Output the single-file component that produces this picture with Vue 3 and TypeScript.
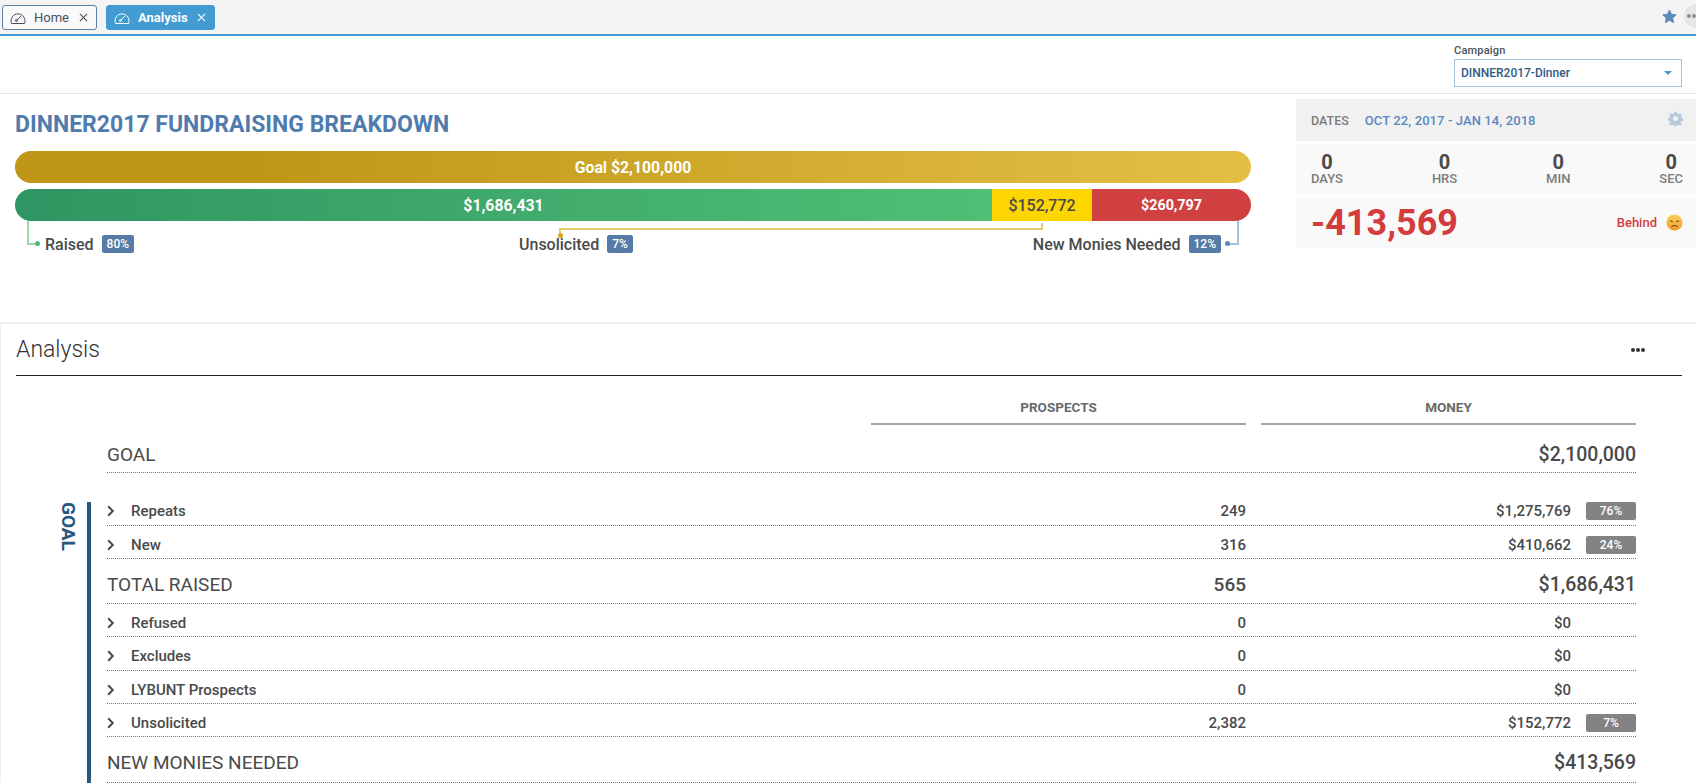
<script setup lang="ts">
interface Row {
  label: string
  prospects: string
  money: string
  pct?: string
  big?: boolean
}
const rows: Row[] = [
  { label: 'Repeats', prospects: '249', money: '$1,275,769', pct: '76%' },
  { label: 'New', prospects: '316', money: '$410,662', pct: '24%' },
  { label: 'TOTAL RAISED', prospects: '565', money: '$1,686,431', big: true },
  { label: 'Refused', prospects: '0', money: '$0' },
  { label: 'Excludes', prospects: '0', money: '$0' },
  { label: 'LYBUNT Prospects', prospects: '0', money: '$0' },
  { label: 'Unsolicited', prospects: '2,382', money: '$152,772', pct: '7%' },
  { label: 'NEW MONIES NEEDED', prospects: '', money: '$413,569', big: true }
]
const timers = [
  { v: '0', l: 'DAYS' },
  { v: '0', l: 'HRS' },
  { v: '0', l: 'MIN' },
  { v: '0', l: 'SEC' }
]
</script>

<template>
  <div class="page">
    <div class="tabbar">
      <div class="tab">
        <svg class="gauge" viewBox="0 0 16 14"><path d="M1.500 12.500a7 7 0 1 1 13 0z" fill="none" stroke="currentColor" stroke-width="1"/><path d="M6.500 9.500L11 5" stroke="currentColor" stroke-width="1"/><circle cx="6.500" cy="9.500" r="1.100" fill="none" stroke="currentColor"/></svg>
        <span class="tab-label">Home</span>
        <svg class="x" viewBox="0 0 10 10"><path d="M1 1l8 8M9 1l-8 8" stroke="currentColor" stroke-width="1.200"/></svg>
      </div>
      <div class="tab active">
        <svg class="gauge" viewBox="0 0 16 14"><path d="M1.500 12.500a7 7 0 1 1 13 0z" fill="none" stroke="currentColor" stroke-width="1"/><path d="M6.500 9.500L11 5" stroke="currentColor" stroke-width="1"/><circle cx="6.500" cy="9.500" r="1.100" fill="none" stroke="currentColor"/></svg>
        <span class="tab-label">Analysis</span>
        <svg class="x" viewBox="0 0 10 10"><path d="M1 1l8 8M9 1l-8 8" stroke="currentColor" stroke-width="1.200"/></svg>
      </div>
      <div class="tab-tools">
        <svg class="star" viewBox="0 0 24 24"><path d="M12 1.500l3.200 6.900 7.400.9-5.500 5.100 1.500 7.400L12 18.100l-6.600 3.700 1.500-7.400L1.400 9.300l7.400-.9z" fill="#5b88bd" stroke="#5b88bd" stroke-width="1.500" stroke-linejoin="round"/></svg>
        <div class="more-circle"><i></i><i></i><i></i></div>
      </div>
    </div>

    <div class="filterbar">
      <div class="field">
        <label>Campaign</label>
        <div class="select">
          <span>DINNER2017-Dinner</span>
          <b class="caret"></b>
        </div>
      </div>
    </div>

    <div class="summary">
      <div class="breakdown">
        <h1>DINNER2017 FUNDRAISING BREAKDOWN</h1>
        <div class="bar goal-bar">Goal $2,100,000</div>
        <div class="bar split-bar">
          <div class="seg seg-green">$1,686,431</div>
          <div class="seg seg-yellow">$152,772</div>
          <div class="seg seg-red">$260,797</div>
        </div>
        <div class="legend">
          <div class="leg leg-raised">
            <span class="conn conn-green"><i></i></span>
            <span class="leg-label">Raised</span><span class="badge">80%</span>
          </div>
          <div class="leg leg-unsol">
            <span class="conn conn-yellow"><i></i></span>
            <span class="leg-label">Unsolicited</span><span class="badge">7%</span>
          </div>
          <div class="leg leg-new">
            <span class="leg-label">New Monies Needed</span><span class="badge">12%</span>
            <span class="conn conn-blue"><i></i></span>
          </div>
        </div>
      </div>

      <aside class="side">
        <div class="dates">
          <span class="dates-k">DATES</span>
          <span class="dates-v">OCT 22, 2017 - JAN 14, 2018</span>
          <svg class="gear" viewBox="0 0 24 24"><path fill="#b9c9dc" fill-rule="evenodd" d="M10 1h4l.6 3 2.200.9 2.600-1.700 2.800 2.800-1.700 2.600.9 2.200 3 .6v4l-3 .6-.9 2.200 1.700 2.600-2.800 2.800-2.600-1.700-2.200.9-.6 3h-4l-.6-3-2.200-.9-2.600 1.700-2.800-2.800 1.700-2.600-.9-2.200-3-.6v-4l3-.6.9-2.200-1.700-2.600L4.600 3.200l2.600 1.700 2.200-.9zM12 8a4 4 0 1 0 0 8 4 4 0 0 0 0-8z"/></svg>
        </div>
        <div class="timers">
          <div v-for="t in timers" :key="t.l" class="timer">
            <strong>{{ t.v }}</strong>
            <span>{{ t.l }}</span>
          </div>
        </div>
        <div class="result">
          <span class="result-num">-413,569</span>
          <span class="result-status">Behind</span>
          <svg class="emoji" viewBox="0 0 20 20">
            <defs>
              <linearGradient id="face" x1="0" y1="0" x2="0" y2="1">
                <stop offset="0" stop-color="#fbd25a"/>
                <stop offset="1" stop-color="#f09a2c"/>
              </linearGradient>
            </defs>
            <circle cx="10" cy="10" r="9.500" fill="url(#face)"/>
            <path d="M4.500 8l3.500 1.200M15.500 8L12 9.200" stroke="#7a4a12" stroke-width="1.300" fill="none"/>
            <path d="M6.500 15q3.500-3 7 0" stroke="#7a4a12" stroke-width="1.300" fill="none"/>
          </svg>
        </div>
      </aside>
    </div>

    <section class="card">
      <header class="card-head">
        <h2>Analysis</h2>
        <div class="dots"><i></i><i></i><i></i></div>
      </header>
      <div class="table">
        <div class="cols">
          <div class="col-spacer"></div>
          <div class="col-h">PROSPECTS</div>
          <div class="col-h">MONEY</div>
        </div>
        <div class="row big goal-row">
          <div class="cell-label">GOAL</div>
          <div class="cell-p"></div>
          <div class="cell-m">$2,100,000</div>
        </div>
        <div class="group">
          <div class="group-tag"><span>GOAL</span></div>
          <div class="group-rows">
            <div v-for="r in rows" :key="r.label" class="row" :class="{ big: r.big }">
              <div class="cell-label">
                <svg v-if="!r.big" class="chev" viewBox="0 0 8 12"><path d="M1.200 1.200L5.800 6l-4.600 4.800" fill="none" stroke="currentColor" stroke-width="2"/></svg>
                {{ r.label }}
              </div>
              <div class="cell-p">{{ r.prospects }}</div>
              <div class="cell-m" :class="{ inset: !r.big }">
                <span>{{ r.money }}</span>
                <em v-if="!r.big" class="pct" :class="{ empty: !r.pct }">{{ r.pct }}</em>
              </div>
            </div>
          </div>
        </div>
      </div>
    </section>
  </div>
</template>

<style>
html, body { margin: 0; background: #fff; overflow: hidden; }
</style>

<style scoped>
.page { width: 1696px; height: 783px; overflow: hidden; font-family: Roboto, "Liberation Sans", sans-serif; color: #4a4a4a; background: #fff; }

.tabbar { height: 34px; box-sizing: content-box; background: #f4f4f4; border-bottom: 2px solid #429bd1; display: flex; align-items: flex-start; }
.tab { margin-top: 5px; height: 25px; box-sizing: border-box; border: 1px solid #5b7ea6; border-radius: 3px; background: #fafafa; display: flex; align-items: center; margin-left: 2px; width: 95px; padding: 0 6px; font-size: 13px; color: #48505c; }
.tab.active { background: #429bd1; border-color: #429bd1; color: #fff; width: 109px; margin-left: 9px; font-weight: 700; font-size: 13px; }
.gauge { width: 16px; height: 14px; flex: none; margin-left: 1px; }
.tab-label { margin-left: 8px; flex: 1; }
.tab.active .tab-label { margin-left: 8px; }
.x { width: 9px; height: 9px; flex: none; margin-right: 2px; }
.tab-tools { margin-left: auto; display: flex; align-items: center; height: 32px; }
.star { width: 15px; height: 15px; margin-right: 7px; }
.more-circle { width: 24px; height: 24px; border-radius: 50%; background: #e6e6e6; display: flex; align-items: center; gap: 1px; padding-left: 3px; box-sizing: border-box; margin-right: -12px; }
.more-circle i { width: 4px; height: 4px; border-radius: 50%; background: #8d8d8d; }

.filterbar { height: 57px; box-sizing: content-box; border-bottom: 1px solid #e6e6e6; display: flex; justify-content: flex-end; padding-right: 14px; }
.field { width: 228px; padding-top: 8px; }
.field label { display: block; font-size: 11px; font-weight: 500; line-height: 14px; color: #4a5058; letter-spacing: .2px; }
.select { margin-top: 1px; height: 28px; box-sizing: border-box; border: 1px solid #a9c1da; display: flex; align-items: center; justify-content: space-between; padding: 0 9px 0 6px; font-size: 12px; font-weight: 500; color: #2f5a85; }
.caret { width: 0; height: 0; border-left: 4px solid transparent; border-right: 4px solid transparent; border-top: 4px solid #429bd1; }

.summary { display: flex; height: 229px; box-sizing: border-box; border-bottom: 1px solid #f0f0f0; }
.breakdown { width: 1236px; margin-left: 15px; }
h1 { margin: 18px 0 0; font-size: 23px; line-height: 26px; font-weight: 700; color: #4f7cac; white-space: nowrap; }
.bar { height: 32px; border-radius: 16px; color: #fff; font-size: 15.800px; font-weight: 700; display: flex; align-items: center; justify-content: center; overflow: hidden; }
.goal-bar { margin-top: 13px; background: linear-gradient(90deg, #bf9618 0%, #bf9618 20%, #e3c045 100%); }
.split-bar { margin-top: 6px; justify-content: flex-start; }
.seg { height: 100%; display: flex; align-items: center; justify-content: center; }
.seg-green { width: 977px; background: linear-gradient(90deg, #2f9562, #50bf75); }
.seg-yellow { width: 100px; background: #fdd500; color: #4a4a4a; font-size: 16px; font-weight: 500; }
.seg-red { flex: 1; background: #d04040; font-size: 14.300px; }

.legend { position: relative; height: 34px; }
.leg { position: absolute; top: 14px; display: flex; align-items: center; height: 18px; font-size: 16px; font-weight: 500; color: #4a4a4a; white-space: nowrap; }
.leg-raised { left: 30px; }
.leg-unsol { left: 504px; }
.leg-new { right: 30px; }
.badge { margin-left: 8px; background: #557ba6; color: #fff; font-size: 12px; font-weight: 500; height: 18px; line-height: 18px; padding: 0 5px; border-radius: 2px; }
.conn { position: absolute; box-sizing: border-box; }
.conn i { position: absolute; width: 5px; height: 5px; border-radius: 50%; }
.conn-green { left: -18px; top: -14px; width: 10px; height: 24px; border-left: 2px solid #9bd8ae; border-bottom: 2px solid #9bd8ae; }
.conn-green i { right: -3px; bottom: -3px; background: #4dbb74; }
.conn-yellow { left: 40px; top: -7px; width: 484px; height: 7px; border-left: 2px solid #e8cb70; border-top: 2px solid #e8cb70; }
.conn-yellow::after { content: ""; position: absolute; right: 0; top: -7px; width: 2px; height: 7px; background: #e8cb70; }
.conn-yellow i { left: -3px; bottom: -3px; background: #d9a520; }
.conn-blue { right: -18px; top: -14px; width: 11px; height: 24px; border-right: 2px solid #a9c1da; border-bottom: 2px solid #a9c1da; }
.conn-blue i { left: -3px; bottom: -3px; background: #5b88bd; }

.side { width: 400px; margin-left: 45px; padding-top: 5px; display: flex; flex-direction: column; }
.dates { height: 42px; background: #f1f1f1; display: flex; align-items: center; padding: 0 13px 0 15px; font-size: 13px; font-weight: 500; }
.dates-k { color: #7b7b7b; font-size: 12.500px; }
.dates-v { margin-left: 16px; color: #5b88bd; letter-spacing: .1px; }
.gear { width: 15px; height: 15px; margin-left: auto; margin-top: -3px; }
.timers { margin-top: 3px; height: 50px; background: #f9f9f9; display: flex; justify-content: space-between; padding: 0 13px 0 15px; }
.timer { display: flex; flex-direction: column; align-items: center; }
.timer strong { font-size: 20px; font-weight: 700; line-height: 22px; margin-top: 7px; color: #4a4a4a; }
.timer span { font-size: 13px; font-weight: 500; line-height: 12px; color: #7b7b7b; }
.result { margin-top: 3px; height: 51px; background: #f9f9f9; display: flex; align-items: center; padding: 0 13px 0 15px; }
.result-num { font-size: 36px; font-weight: 700; color: #d33c3c; }
.result-status { margin-left: auto; color: #d33c3c; font-size: 13px; font-weight: 500; }
.emoji { width: 17px; height: 17px; margin-left: 9px; }

.card { border: 1px solid #f0f0f0; border-right: 0; border-bottom: 0; padding: 0 14px 0 15px; height: 460px; }
.card-head { height: 52px; border-bottom: 1.500px solid #222; display: flex; align-items: center; justify-content: space-between; box-sizing: border-box; }
h2 { margin: 0; font-size: 23px; font-weight: 300; color: #333; }
.dots { display: flex; gap: 1px; margin-right: 37px; }
.dots i { width: 4px; height: 4px; border-radius: 50%; background: #333; }

.table { padding-right: 46px; padding-left: 91px; }
.cols, .row { display: grid; column-gap: 15px; grid-template-columns: 1fr 375px 375px; }
.cols { height: 49px; align-items: end; }
.col-h { height: 33px; box-sizing: border-box; text-align: center; font-size: 13.500px; font-weight: 700; color: #6a6a6a; border-bottom: 2px solid #a5a5a5; line-height: 30px; }
.row { height: 33.200px; padding-top: 6px; align-items: center; border-bottom: 1px dotted #777; font-size: 15px; font-weight: 500; box-sizing: border-box; color: #4a4a4a; }
.group-rows .row:first-child { height: 24px; padding-top: 0; padding-bottom: 6px; }
.row.big { height: 45px; padding-top: 7px; font-size: 19px; font-weight: 400; }
.group-rows .row.big:last-child { height: 46px; padding-top: 6px; }
.goal-row { height: 48px !important; padding-top: 12px !important; }
.goal-row .cell-m, .row.big .cell-p, .row.big .cell-m { font-weight: 500; }
.row.big .cell-m { font-size: 19.500px; }
.cell-label { display: flex; align-items: center; white-space: nowrap; }
.chev { width: 8px; height: 12px; margin-right: 16px; }
.cell-p { text-align: right; }
.cell-m { text-align: right; }
.cell-m.inset { display: flex; justify-content: flex-end; align-items: center; }
.pct { width: 50px; height: 18px; line-height: 18px; margin-left: 15px; text-align: center; font-style: normal; font-size: 12px; background: #838383; color: #fff; border-radius: 2px; }
.pct.empty { background: transparent; }

.group { position: relative; margin-top: 29px; }
.group-tag { position: absolute; left: -20px; top: 0; bottom: 0; width: 4px; background: #27567e; }
.group-tag span { position: absolute; right: 13px; top: 0; writing-mode: vertical-rl; font-size: 19px; font-weight: 700; color: #27567e; line-height: 20px; }
</style>
